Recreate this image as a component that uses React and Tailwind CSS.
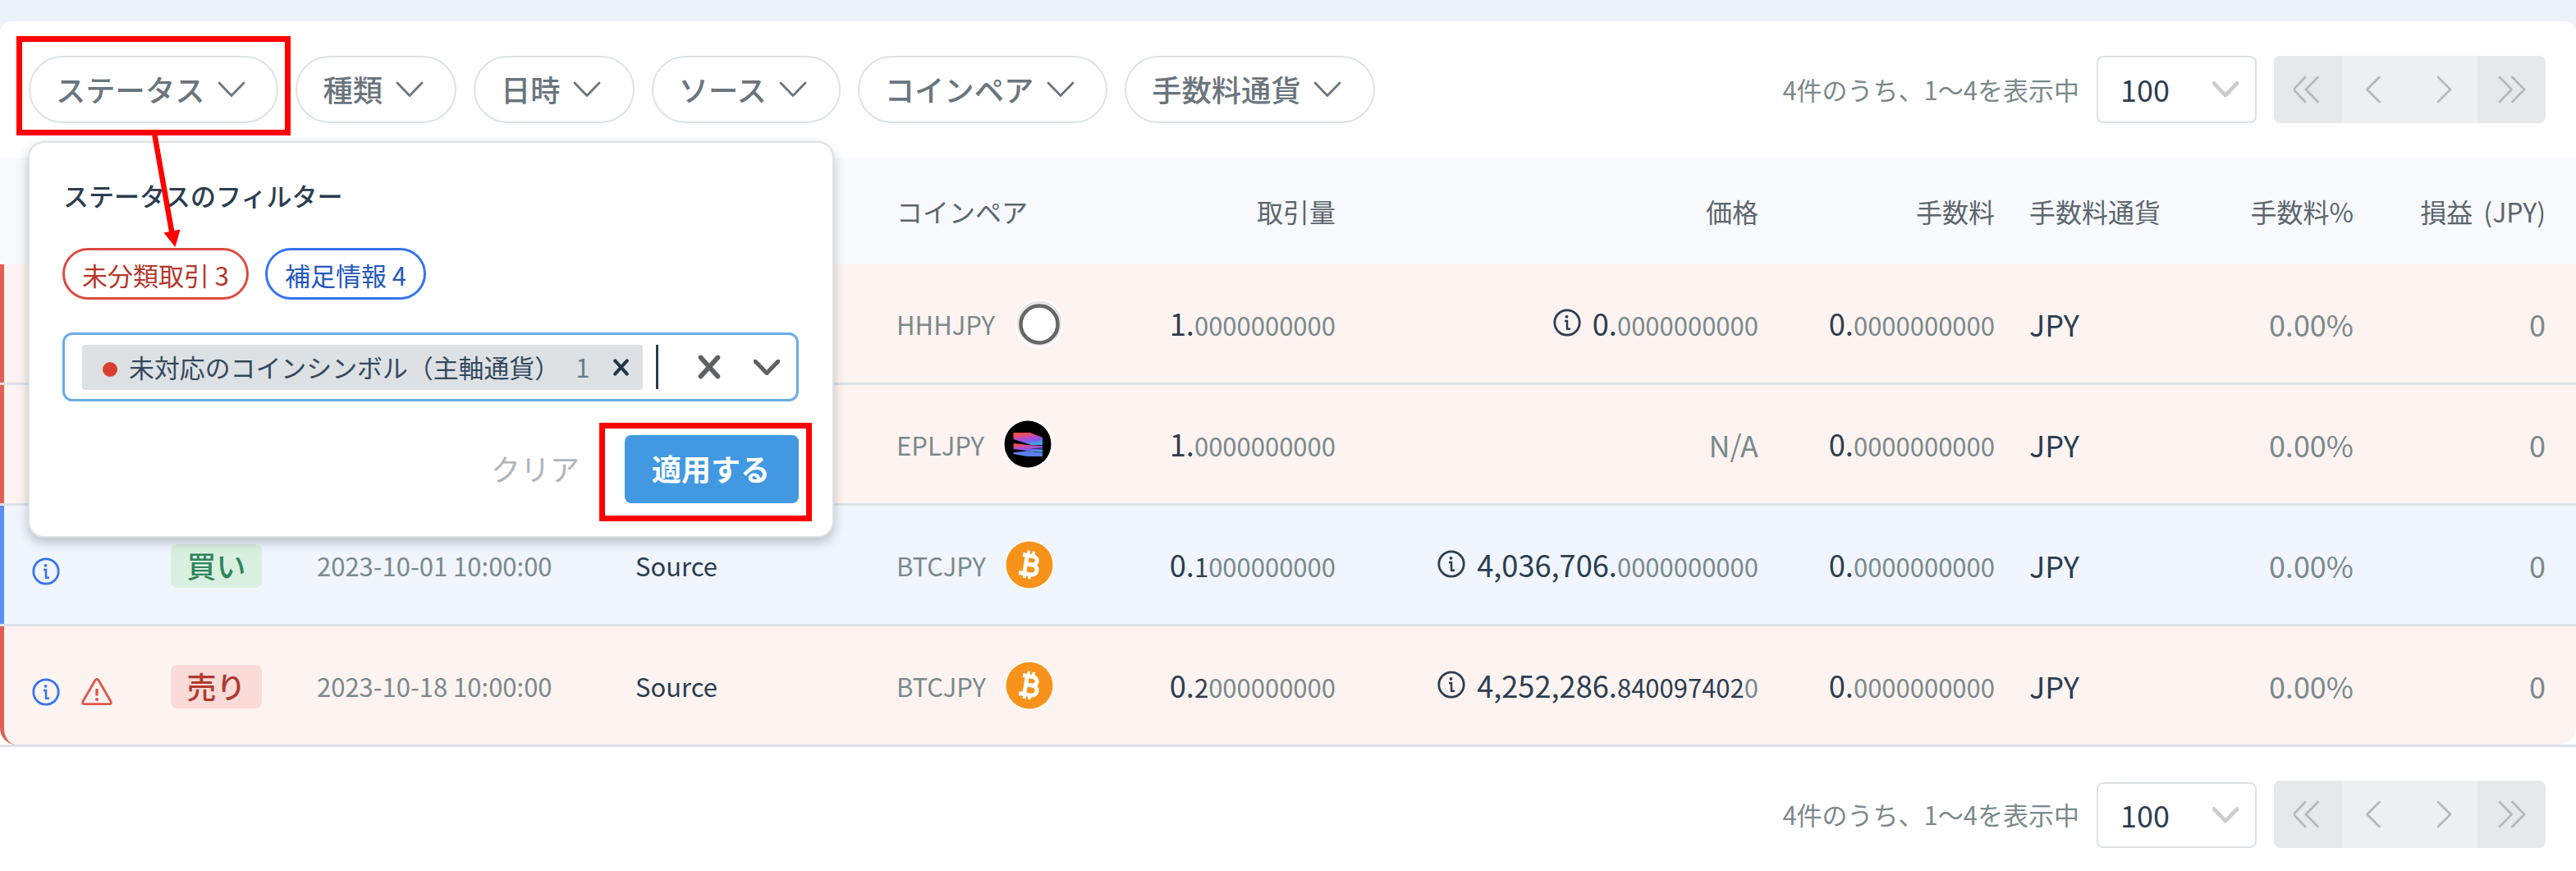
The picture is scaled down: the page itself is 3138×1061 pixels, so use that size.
import clsx from "clsx";

const FILTERS = ["ステータス", "種類", "日時", "ソース", "コインペア", "手数料通貨"];

const ROWS = [
  {
    tone: "red",
    pair: "HHHJPY",
    coin: "unknown",
    amount: ["1.", "", "0000000000"],
    price: ["0.", "", "0000000000"],
  },
  {
    tone: "red",
    pair: "EPLJPY",
    coin: "epl",
    amount: ["1.", "", "0000000000"],
    price: null,
  },
  {
    tone: "blue",
    info: true,
    side: "買い",
    date: "2023-10-01 10:00:00",
    source: "Source",
    pair: "BTCJPY",
    coin: "btc",
    amount: ["0.", "1", "000000000"],
    price: ["4,036,706.", "", "0000000000"],
  },
  {
    tone: "red",
    info: true,
    warn: true,
    side: "売り",
    date: "2023-10-18 10:00:00",
    source: "Source",
    pair: "BTCJPY",
    coin: "btc",
    amount: ["0.", "2", "000000000"],
    price: ["4,252,286.", "840097402", "0"],
    last: true,
  },
];

const COLS =
  "grid grid-cols-[203px_178px_388px_318px_268px_267px_515px_288px_270px_167px_234px] items-center";

const Chevron = ({ className, width = 3 }) => (
  <svg viewBox="0 0 34 20" fill="none" stroke="currentColor" strokeWidth={width} strokeLinecap="round" strokeLinejoin="round" className={className}>
    <path d="M2 2l15 15.500 15-15.500" />
  </svg>
);

const Cross = ({ className, width = 5 }) => (
  <svg viewBox="0 0 26 26" fill="none" stroke="currentColor" strokeWidth={width} strokeLinecap="round" className={className}>
    <path d="M4 3l18 20M22 3L4 23" />
  </svg>
);

const InfoIcon = ({ className }) => (
  <svg viewBox="0 0 34 34" fill="none" stroke="currentColor" className={className}>
    <circle cx="17" cy="17" r="15.200" strokeWidth="2.800" />
    <circle cx="16.500" cy="9.800" r="1.900" fill="currentColor" stroke="none" />
    <path d="M14 15h3v9.500M16 24.800h5" strokeWidth="2.500" />
  </svg>
);

const WarnIcon = ({ className }) => (
  <svg viewBox="0 0 38 34" fill="none" stroke="currentColor" strokeLinejoin="round" className={className}>
    <path d="M17 2.500L2 28.500q-1.200 3.200 2 3.200h30q3.200 0 2-3.200L21 2.500q-2-2-4 0z" strokeWidth="2.800" />
    <path d="M19 13v8.500" strokeWidth="3.400" />
    <circle cx="19" cy="26" r="2" fill="currentColor" stroke="none" />
  </svg>
);

const Coin = ({ kind }) => {
  if (kind === "unknown") {
    return (
      <svg viewBox="0 0 60 60" className="ml-6 size-15">
        <circle cx="30" cy="30" r="29.500" fill="#fff" />
        <circle cx="30" cy="30" r="27.500" fill="#e6e6e6" />
        <circle cx="30" cy="31" r="22.500" fill="#fff" stroke="#666" strokeWidth="4.500" />
      </svg>
    );
  }
  if (kind === "epl") {
    return (
      <svg viewBox="0 0 60 60" className="ml-[23px] size-15">
        <defs>
          <linearGradient id="epl" x1="0" y1="0" x2="0.35" y2="1">
            <stop offset="0.15" stopColor="#ff4b45" />
            <stop offset="0.55" stopColor="#b04fd0" />
            <stop offset="0.8" stopColor="#7a5cf0" />
            <stop offset="1" stopColor="#3fa0e0" />
          </linearGradient>
        </defs>
        <circle cx="30" cy="30" r="30" fill="#fff" />
        <circle cx="30" cy="30" r="28.500" fill="#000" />
        <path d="M12.500 16h20l15.500 6v9H34l-21.500-7z" fill="url(#epl)" />
        <path d="M12.500 29l17 2 18.500 1v8l-18-1.500-17.500-2z" fill="url(#epl)" />
        <path d="M12.500 40l17-1.500 18.500 2V45H29l-16.500-3z" fill="#5f7fee" />
        <path d="M12.500 35.500l16 2.500-16 1.500zM48 34l-15 1.500 15 1.500z" fill="#000" opacity="0.5" />
      </svg>
    );
  }
  return (
    <svg viewBox="0 0 60 60" className="ml-[23px] size-15">
      <circle cx="30" cy="30" r="30" fill="#fff" />
      <circle cx="30" cy="30" r="28.500" fill="#f7931a" />
      <g transform="rotate(10 30 30)" fill="none" stroke="#fff" strokeWidth="5">
        <path d="M20 19h12c8.500 0 8.500 10.500 0 10.500h-6M26 29.500h7c9.500 0 9.500 12 0 12H19M25.500 19v22" />
        <path d="M26.500 13v6M32.500 13v6M26.500 41v6M32.500 41v6" strokeWidth="3.500" />
      </g>
    </svg>
  );
};

const Num = ({ parts }) => (
  <span className="text-[36.2px] text-[#2c3e50]">
    {parts[0]}
    <span className="text-[31px]">{parts[1]}</span>
    <span className="text-[31px] text-[#7b8a8b]">{parts[2]}</span>
  </span>
);

const PagerArrow = ({ d, className }) => (
  <div className={clsx("flex flex-1 items-center justify-center", className)}>
    <svg viewBox="0 0 34 34" fill="none" stroke="#b4b9bd" strokeWidth="2.800" strokeLinecap="round" strokeLinejoin="round" className="size-[34px]">
      <path d={d} />
    </svg>
  </div>
);

const Pager = ({ small }) => (
  <div className="flex items-end">
    <span className="mr-[21px] flex h-[82px] items-center text-[31px] text-[#7b8a8b]">4件のうち、1～4を表示中</span>
    <div
      className={clsx(
        "mr-[21px] flex w-[195px] items-center justify-between rounded-lg border-2 border-[#dee2e6] pr-[20px] pl-[27px] text-[36px] text-[#2c3e50]",
        small ? "h-[80px]" : "h-[82px]"
      )}
    >
      <span className="pb-[3px]">100</span>
      <Chevron className="h-5 w-[32px] text-[#ccc]" width={5} />
    </div>
    <div className="flex h-[82px] w-[331px] overflow-hidden rounded-lg">
      <PagerArrow className="bg-[#e6e8ea]" d="M14 2L0 17l14 15M29.500 2L15 17l14.500 15" />
      <PagerArrow className="bg-[#edeff1]" d="M21.500 2L6.500 17l15 15" />
      <PagerArrow className="bg-[#edeff1]" d="M10 2l15 15-15 15" />
      <PagerArrow className="bg-[#e6e8ea]" d="M2 2l14.500 15L2 32M17.500 2L32 17 17.500 32" />
    </div>
  </div>
);

const TradeRow = ({ row }) => (
  <div className={clsx("h-[147px] border-b-3 border-[#dee2e6]", row.last && "bg-white")}>
    <div
      className={clsx(
        COLS,
        "h-[144px] border-l-[5px]",
        row.tone === "red" ? "border-[#e06055] bg-[#fdf3f1]" : "border-[#5a8ff5] bg-[#f0f5fe]",
        row.last && "rounded-b-[20px]"
      )}
    >
      <div className="flex gap-6.5 pt-4 pl-[34px]">
        {row.info && <InfoIcon className="size-[34px] text-[#3574f2]" />}
        {row.warn && <WarnIcon className="h-[34px] w-[38px] text-[#e0564a]" />}
      </div>
      <div className="pt-0.5">
        {row.side && (
          <span
            className={clsx(
              "flex h-[53px] w-[111px] items-center justify-center rounded-lg pb-0.5 text-[36px] leading-none font-medium",
              row.side === "買い" ? "bg-[#d9f0e1] text-[#2f855a]" : "bg-[#fadbd8] text-[#b03a2e]"
            )}
          >
            {row.side}
          </span>
        )}
      </div>
      <span className="pt-0.5 text-[31px] text-[#7b8a8b]">{row.date}</span>
      <span className="pt-0.5 text-[31px] text-[#2c3e50]">{row.source}</span>
      <div className="flex items-center text-[31px] text-[#7b8a8b]">
        <span className="pt-0.5">{row.pair}</span>
        <Coin kind={row.coin} />
      </div>
      <div className="pb-px text-right">
        <Num parts={row.amount} />
      </div>
      <div className="flex items-center justify-end gap-3.5 pb-px">
        {row.price ? (
          <>
            <InfoIcon className="size-[34px] text-[#2c3e50]" />
            <Num parts={row.price} />
          </>
        ) : (
          <span className="text-[36px] text-[#7b8a8b]">N/A</span>
        )}
      </div>
      <div className="pb-px text-right">
        <Num parts={["0.", "", "0000000000"]} />
      </div>
      <span className="pb-px pl-[42px] text-[36px] text-[#2c3e50]">JPY</span>
      <span className="pb-px text-right text-[36px] text-[#7b8a8b]">0.00%</span>
      <span className="pb-px text-right text-[36px] text-[#7b8a8b]">0</span>
    </div>
  </div>
);

const StatusPopup = () => (
  <div className="absolute top-[146px] left-[34px] h-[483px] w-[982px] rounded-[20px] border-2 border-[#dee2e6] bg-white pt-[39px] pr-[41px] pl-[40px] shadow-[0_6px_14px_rgba(0,0,0,0.22)]">
    <h2 className="h-[50px] pl-px text-[31px] leading-[50px] font-medium text-[#2c3e50]">ステータスのフィルター</h2>
    <div className="mt-[39px] flex gap-5">
      <span className="flex h-[63px] w-[227px] items-center justify-center rounded-full border-3 border-[#dc4c40] pt-0.5 text-[31px] leading-none text-[#b5372b]">
        未分類取引 3
      </span>
      <span className="flex h-[63px] w-[196px] items-center justify-center rounded-full border-3 border-[#3574f2] pt-0.5 text-[31px] leading-none text-[#2458bd]">
        補足情報 4
      </span>
    </div>
    <div className="mt-10 flex h-[84px] items-center rounded-xl border-3 border-[#69aee6] pr-5 pl-[21px]">
      <div className="flex h-[55px] w-[683px] items-center rounded bg-[#dde1e4] pl-[25px] text-[30.9px] leading-none text-[#34495e]">
        <span className="mt-1.5 size-[18px] rounded-full bg-[#d9402f]" />
        <span className="ml-[14px]">未対応のコインシンボル（主軸通貨）</span>
        <span className="ml-[19px] text-[#6b7a86]">1</span>
        <Cross className="ml-auto mr-[16px] size-[21px] text-[#22364a]" width={5} />
      </div>
      <span className="ml-4 h-[54px] w-[3px] bg-[#2c3e50]" />
      <Cross className="ml-auto size-[30px] text-[#5f6163]" width={5} />
      <Chevron className="ml-[39px] h-[19px] w-[32px] text-[#5f6163]" width={5.5} />
    </div>
    <div className="mt-[41px] flex items-center justify-end">
      <span className="mr-[55px] pb-1 text-[36px] text-[#b0b5b9]">クリア</span>
      <span className="flex h-[83px] w-[212px] items-center justify-center rounded-lg bg-[#4299e1] pr-0.5 pb-1 text-[36px] font-bold text-white">
        適用する
      </span>
    </div>
  </div>
);

const Annotations = () => (
  <>
    <div className="absolute top-[44px] left-[20px] h-[121px] w-[334px] border-7 border-[#ff0000]" />
    <div className="absolute top-[515px] left-[730px] h-[120px] w-[259px] border-7 border-[#ff0000]" />
    <svg viewBox="0 0 60 150" className="absolute top-[160px] left-[170px] h-[150px] w-[60px]">
      <path d="M18 2L39.500 124" stroke="#f00" strokeWidth="6.500" />
      <path d="M29.500 123.500L49.500 119.500 43.500 141z" fill="#f00" />
    </svg>
  </>
);

const App = () => {
  return (
    <div lang="ja" className="relative h-[1061px] w-[3138px] overflow-hidden bg-[#edf2fa] pt-[26px] font-['Noto_Sans_CJK_JP',sans-serif]">
      <div className="relative h-[1035px] rounded-t-[14px] bg-white">
        <div className="flex h-[166px] items-start justify-between pt-[42px] pr-[37px] pl-[35px]">
          <div className="flex gap-[21px]">
            {FILTERS.map((f) => (
              <div
                key={f}
                className="flex h-[82px] items-center rounded-full border-2 border-[#dee2e6] pr-[38.5px] pl-[31px] text-[36.3px] font-medium text-[#6a757d]"
              >
                <span className="pb-0.5">{f}</span>
                <Chevron className="ml-[15.5px] h-5 w-[34px]" width={2.8} />
              </div>
            ))}
          </div>
          <Pager />
        </div>

        <div className={clsx(COLS, "h-[130px] border-l-[5px] border-transparent bg-[#f7f9fd] text-[32px] text-[#5d666e]")}>
          <span className="col-start-5">コインペア</span>
          <span className="text-right">取引量</span>
          <span className="text-right">価格</span>
          <span className="text-right">手数料</span>
          <span className="pl-[42px]">手数料通貨</span>
          <span className="text-right">手数料%</span>
          <span className="text-right [word-spacing:6px]">損益 (JPY)</span>
        </div>

        {ROWS.map((row, i) => (
          <TradeRow key={i} row={row} />
        ))}

        <div className="flex justify-end pt-[41px] pr-[37px]">
          <Pager small />
        </div>

        <StatusPopup />
      </div>
      <Annotations />
    </div>
  );
};

export default App;
